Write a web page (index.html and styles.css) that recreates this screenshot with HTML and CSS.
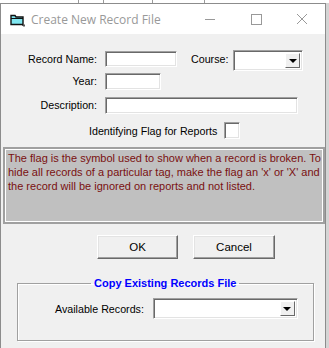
FILE: index.html
```html
<!DOCTYPE html>
<html lang="en">
<head>
  <meta charset="UTF-8" />
  <title>Create New Record File</title>
  <link rel="stylesheet" href="styles.css">
</head>
<body>

  <!-- window behind the dialog -->
  <div class="behind">
    <span style="left:78px"></span>
    <span style="left:103px"></span>
    <span style="left:152px"></span>
    <span style="left:204px"></span>
  </div>

  <div class="dialog">
    <!-- Title bar -->
    <div class="titlebar">
      <svg class="app-icon" width="16" height="14" viewBox="0 0 16 14">
        <path d="M1 2.5h4l1 1.5h7v7.5H1z" fill="#7fe6f0" stroke="#111" stroke-width="1.4"/>
        <path d="M1 5.5h12" stroke="#111" stroke-width="1"/>
        <path d="M12 12.5h3M14 11v3" stroke="#555" stroke-width="1"/>
      </svg>
      <span class="title">Create New Record File</span>
      <div class="controls">
        <svg width="46" height="30" viewBox="0 0 46 30"><path d="M18 15.5h10" stroke="#999" stroke-width="1"/></svg>
        <svg width="46" height="30" viewBox="0 0 46 30"><rect x="18.5" y="10.5" width="10" height="10" fill="none" stroke="#999" stroke-width="1"/></svg>
        <svg width="46" height="30" viewBox="0 0 46 30"><path d="M18 10l10 10M28 10l-10 10" stroke="#999" stroke-width="1"/></svg>
      </div>
    </div>

    <!-- Client area -->
    <div class="client">
      <div class="row row-name">
        <label class="lbl">Record Name:</label>
        <div class="field name-field"></div>
        <label class="lbl-course">Course:</label>
        <div class="combo course-combo"><span class="drop"></span></div>
      </div>

      <div class="row row-year">
        <label class="lbl">Year:</label>
        <div class="field year-field"></div>
      </div>

      <div class="row row-desc">
        <label class="lbl">Description:</label>
        <div class="field desc-field"></div>
      </div>

      <div class="row row-flag">
        <label>Identifying Flag for Reports</label>
        <div class="field flag-box"></div>
      </div>

      <div class="note">
        The flag is the symbol used to show when a record is broken. To<br>
        hide all records of a particular tag, make the flag an 'x' or 'X' and<br>
        the record will be ignored on reports and not listed.
      </div>

      <div class="buttons">
        <button class="btn btn-ok">OK</button>
        <button class="btn btn-cancel">Cancel</button>
      </div>

      <fieldset class="copy-group">
        <legend>Copy Existing Records File</legend>
        <div class="row row-avail">
          <label>Available Records:</label>
          <div class="combo avail-combo"><span class="drop"></span></div>
        </div>
      </fieldset>
    </div>
  </div>

</body>
</html>
```

FILE: styles.css
```css
* { margin: 0; padding: 0; box-sizing: border-box; }
body {
  font-family: 'Liberation Sans', Arial, sans-serif;
  font-size: 10.7px;
  color: #000;
  background-color: #d4d4d4;
  width: 329px;
  height: 348px;
  overflow: hidden;
}

/* strip of the window behind */
.behind {
  height: 3px;
  background-color: #fff;
  position: relative;
}
.behind span {
  position: absolute;
  top: 0;
  width: 1px;
  height: 3px;
  background-color: #9a9a9a;
}

.dialog {
  width: 326px;
  height: 345px;
  border: 1px solid #8c8c8c;
  border-bottom: none;
  background-color: #f0f0f0;
}

/* --- title bar --- */
.titlebar {
  height: 30px;
  background-color: #fff;
  display: flex;
  align-items: center;
}
.app-icon { margin-left: 9px; margin-top: 1px; }
.title {
  font-family: 'Open Sans', 'Noto Sans', sans-serif;
  font-size: 12px;
  color: #999;
  margin-left: 5px;
}
.controls {
  margin-left: auto;
  display: flex;
}

/* --- client --- */
.client { padding-top: 16px; }

.row { display: flex; align-items: flex-start; }
.lbl {
  width: 96px;
  text-align: right;
  margin-right: 8px;
  line-height: 16px;
}

.field,
.combo {
  background-color: #fff;
  border-top: 1px solid #a0a0a0;
  border-left: 1px solid #a0a0a0;
  border-bottom: 1px solid #fff;
  border-right: 1px solid #fff;
  box-shadow: inset 1px 1px 0 #696969, inset -1px -1px 0 #e3e3e3;
}
.combo { position: relative; }
.combo .drop {
  position: absolute;
  right: 2px;
  top: 2px;
  bottom: 2px;
  width: 15px;
  background-color: #f0f0f0;
  border-top: 1px solid #fff;
  border-left: 1px solid #fff;
  border-right: 1px solid #696969;
  border-bottom: 1px solid #696969;
  display: flex;
  align-items: center;
  justify-content: center;
}
.combo .drop::after {
  content: "";
  border-left: 4px solid transparent;
  border-right: 4px solid transparent;
  border-top: 4px solid #000;
  margin-top: 1px;
}

.row-name { height: 21px; }
.row-name .lbl { margin-top: 1px; }
.name-field { width: 72px; height: 16px; margin-top: 1px; }
.lbl-course { margin-left: 14px; width: 37px; line-height: 16px; margin-top: 1px; }
.course-combo { width: 70px; height: 21px; margin-left: 5px; }

.row-year { margin-top: 2px; }
.year-field { width: 56px; height: 17px; }

.row-desc { margin-top: 7px; }
.desc-field { width: 193px; height: 17px; }

.row-flag { margin-top: 8px; margin-left: 88px; align-items: center; }
.flag-box { width: 16px; height: 17px; margin-left: 7px; }

.note {
  margin: 8px 0 0 2px;
  width: 322px;
  height: 77px;
  background-color: #c0c0c0;
  border: 2px solid #a0a0a0;
  box-shadow: inset 0 0 0 1px #fff;
  color: #7a1010;
  font-size: 11px;
  line-height: 14px;
  padding: 2px 3px;
  white-space: nowrap;
  overflow: hidden;
}

.buttons {
  display: flex;
  margin: 11px 0 0 96px;
  gap: 15px;
}
.btn {
  font-family: 'Liberation Sans', Arial, sans-serif;
  font-size: 11.5px;
  height: 24px;
  background-color: #f0f0f0;
  border-top: 1px solid #fff;
  border-left: 1px solid #fff;
  border-right: 1px solid #696969;
  border-bottom: 1px solid #696969;
  box-shadow: inset -1px -1px 0 #a0a0a0, inset 1px 1px 0 #e3e3e3;
}
.btn-ok { width: 81px; }
.btn-cancel { width: 82px; }

.copy-group {
  margin: 18px 0 0 16px;
  width: 297px;
  height: 64px;
  border: 1px solid #a0a0a0;
  box-shadow: 1px 1px 0 #fff, inset 1px 1px 0 #fff;
}
.copy-group legend {
  margin-left: 73px;
  padding: 0 3px;
  color: #0000ff;
  font-weight: bold;
  font-size: 11px;
}
.row-avail { margin: 9px 0 0 37px; align-items: center; }
.avail-combo { width: 145px; height: 21px; margin-left: 9px; }
```
